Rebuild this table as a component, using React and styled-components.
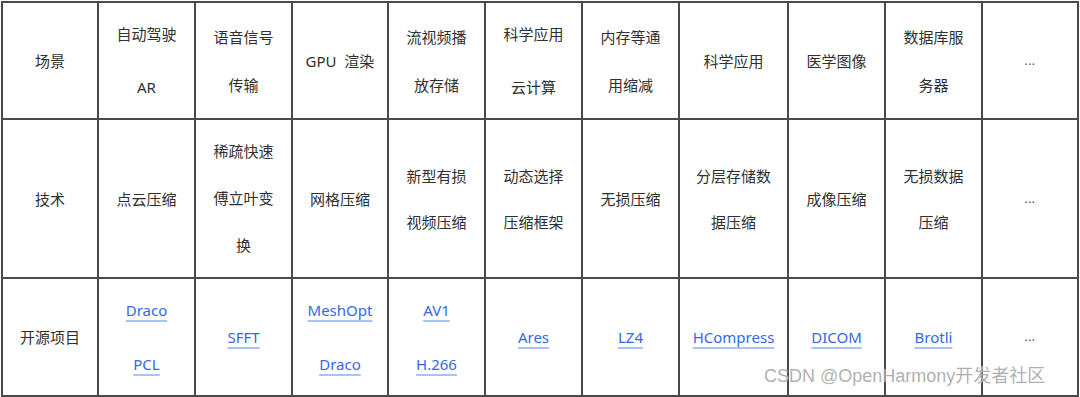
import React from "react";
import styled, { createGlobalStyle } from "styled-components";

const Global = createGlobalStyle`
  html, body { margin: 0; padding: 0; background: #ffffff; }
  body { font-family: "Noto Sans", "Noto Sans CJK SC", sans-serif; }
`;

const Page = styled.div`
  position: relative;
  width: 1080px;
  height: 397px;
  padding: 1px 0 0 1px;
  box-sizing: border-box;
  background: #fff;
`;

const Table = styled.div`
  display: grid;
  grid-template-columns: 94px 95px 95px 94px 95px 95px 95px 107px 95px 95px 94px;
  grid-template-rows: 115px 157px 116px;
  gap: 2px;
  padding: 2px;
  width: max-content;
  background: #4a4a4a;
`;

const Cell = styled.div`
  background: #fff;
  display: flex;
  flex-direction: column;
  align-items: center;
  justify-content: center;
  text-align: center;
  color: #303030;
  font-size: 15px;
  line-height: ${(p) => p.$lh || 24}px;
`;

const Line = styled.div`
  white-space: pre;
`;

const Link = styled.a`
  color: #3468e6;
  text-decoration: underline;
  text-decoration-color: #a9c3f7;
  text-decoration-thickness: 2px;
  text-underline-offset: 4px;
  white-space: nowrap;
  cursor: pointer;
`;

const Dots = styled.span`
  font-size: 12px;
  color: #555;
  letter-spacing: 0.5px;
`;

const Watermark = styled.div`
  position: absolute;
  left: 764px;
  top: 364px;
  font-family: "Liberation Sans", "Noto Sans CJK SC", sans-serif;
  font-size: 18px;
  line-height: 24px;
  color: rgba(140, 140, 140, 0.7);
  text-shadow: 0 0 1px rgba(255, 255, 255, 0.9);
  white-space: nowrap;
  pointer-events: none;
`;

const rows = [
  [
    { lines: ["场景"] },
    { lines: ["自动驾驶", "AR"], lh: 53 },
    { lines: ["语音信号", "传输"], lh: 48 },
    { lines: ["GPU  渲染"] },
    { lines: ["流视频播", "放存储"], lh: 48 },
    { lines: ["科学应用", "云计算"], lh: 53 },
    { lines: ["内存等通", "用缩减"], lh: 48 },
    { lines: ["科学应用"] },
    { lines: ["医学图像"] },
    { lines: ["数据库服", "务器"], lh: 48 },
    { dots: true },
  ],
  [
    { lines: ["技术"] },
    { lines: ["点云压缩"] },
    { lines: ["稀疏快速", "傅立叶变", "换"], lh: 47 },
    { lines: ["网格压缩"] },
    { lines: ["新型有损", "视频压缩"], lh: 46 },
    { lines: ["动态选择", "压缩框架"], lh: 46 },
    { lines: ["无损压缩"] },
    { lines: ["分层存储数", "据压缩"], lh: 46 },
    { lines: ["成像压缩"] },
    { lines: ["无损数据", "压缩"], lh: 46 },
    { dots: true },
  ],
  [
    { lines: ["开源项目"] },
    { links: ["Draco", "PCL"], lh: 54 },
    { links: ["SFFT"] },
    { links: ["MeshOpt", "Draco"], lh: 54 },
    { links: ["AV1", "H.266"], lh: 54 },
    { links: ["Ares"] },
    { links: ["LZ4"] },
    { links: ["HCompress"] },
    { links: ["DICOM"] },
    { links: ["Brotli"] },
    { dots: true },
  ],
];

export default function App() {
  return (
    <>
      <Global />
      <Page>
        <Table>
          {rows.map((row, r) =>
            row.map((c, i) => (
              <Cell key={`${r}-${i}`} $lh={c.lh}>
                {c.dots && <Dots>...</Dots>}
                {c.lines &&
                  c.lines.map((t, k) => <Line key={k}>{t}</Line>)}
                {c.links &&
                  c.links.map((t, k) => (
                    <Line key={k}>
                      <Link>{t}</Link>
                    </Line>
                  ))}
              </Cell>
            ))
          )}
        </Table>
        <Watermark>CSDN @OpenHarmony开发者社区</Watermark>
      </Page>
    </>
  );
}
